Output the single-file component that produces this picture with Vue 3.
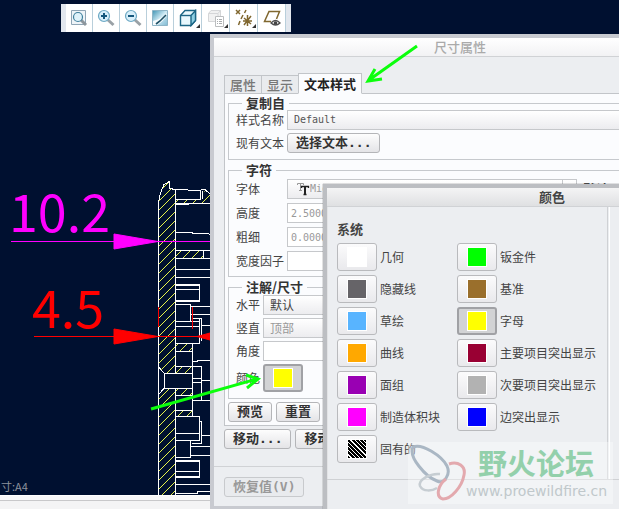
<script setup>
import { ref } from 'vue'

const tabs = ['属性', '显示', '文本样式']
const activeTab = ref('文本样式')

const colors = [
  { name: '几何', swatch: 'white' },
  { name: '钣金件', swatch: 'green' },
  { name: '隐藏线', swatch: 'gray' },
  { name: '基准', swatch: 'brown' },
  { name: '草绘', swatch: 'sky' },
  { name: '字母', swatch: 'yellow' },
  { name: '曲线', swatch: 'orange' },
  { name: '主要项目突出显示', swatch: 'crimson' },
  { name: '面组', swatch: 'purple' },
  { name: '次要项目突出显示', swatch: 'silver' },
  { name: '制造体积块', swatch: 'magenta' },
  { name: '边突出显示', swatch: 'blue' },
  { name: '固有的', swatch: 'hatch' },
]
const picked = ref('字母')
</script>

<template>
  <main class="desktop">
    <svg class="drawing" width="619" height="509" viewBox="0 0 619 509" aria-label="工程图">
      <defs>
        <pattern id="hatch" width="9" height="9" patternUnits="userSpaceOnUse">
          <path d="M-1 10L10-1M-1 1L1-1M8 10L10 8" stroke="#e6f24a" stroke-width="1" fill="none" />
        </pattern>
      </defs>
      <g fill="url(#hatch)" stroke="none">
        <path d="M159 202L160 193L164 184L169 181V188L175 190V373H164L159 367Z" />
        <path d="M164 388H175V495H159V394Z" />
        <path d="M175 200H201L205 190L210 194V203H175Z" />
        <path d="M175 250H203V258H175ZM175 344H192V351H175ZM175 367H192V373H175ZM175 388H192V395H175ZM175 411H192V416H175Z" />
      </g>
      <g class="lines">
        <path d="M158.500 495V202.500L160.500 193L164 184.500L169.500 181.500V188.500L175.500 189.500V351.500M175.500 366V373M175.500 388V495" />
        <path d="M175.500 189.500L200.500 190.500V199.500H175.500M202.500 191V199M201 189.500H205L210 194M175.500 203.500H210M175 204.500H189" />
        <path d="M175.500 232.500H192L193 233.500H208L210 234.500M175.500 250.500H210M203.500 250V258M175.500 258.500H210M175.500 269.500H210M175.500 277.500H210" />
        <path d="M175.500 284.500H199.500V301.500H175.500M175.500 285.500H199M175.500 289.500H199M175.500 300.500H199" />
        <path d="M175.500 304.500H190.500V321.500M190.500 306.500H210M190.500 314.500H210M192 318.500H201.500V340.500M199.500 319V343.500H175.500M175.500 321.500H199M175.500 326.500H199M201 325.500H210" />
        <path d="M192.500 343V400M175.500 351.500H192M175.500 351V366.500H192M158.500 367L164.500 373.500H192M164.500 373V388.500H192M164.500 388L158.500 394.500" />
        <path d="M192.500 361.500H197V360.500H210M192.500 366.500H201.500V400.500H210M192.500 378.500H201M192.500 382.500H201M201 380.500H210M201 400.500H192" />
        <path d="M175.500 395.500H192.500V410.500H175.500ZM192.500 410V416.500M175.500 416.500H199.500V440.500H175.500M175.500 433.500H199M199 421.500H201.500V443.500H192M201 435.500H210" />
        <path d="M175.500 440.500H190.500V457.500H175.500M190.500 446.500H210M190.500 455.500H210M175.500 460.500H199.500V477.500H175.500M175.500 461.500H199M175.500 471.500H199M175.500 476.500H199M175.500 484.500H210M175.500 493.500H197V491.500H210" />
      </g>
      <g class="dim-magenta">
        <path d="M11 241.500H210" />
        <path d="M114 234L158 241.500L114 249Z" />
        <text x="9" y="232">10.2</text>
      </g>
      <g class="dim-red">
        <path d="M34 336.500H210M158.500 307V327M192.500 307V329" />
        <path d="M114 329L158 336.500L114 344ZM197 336.500L210 333V340Z" />
        <text x="32" y="328">4.5</text>
      </g>
      <text class="sheet" x="1" y="491">寸:A4</text>
    </svg>
    <div class="statusbar"></div>

    <nav class="toolbar">
      <button type="button" aria-label="重新调整">
        <svg width="18" height="18" viewBox="0 0 18 18">
          <path d="M1.500 1.500H15.500V15.500H1.500Z" fill="#eef4f8" stroke="#8fa5b5" />
          <path d="M11 11L16 16" stroke="#8d969c" stroke-width="3" />
          <circle cx="8" cy="8" r="4.500" fill="#dff2fa" stroke="#3f7f9c" stroke-width="1.200" />
        </svg>
      </button>
      <button type="button" aria-label="放大">
        <svg width="18" height="18" viewBox="0 0 18 18">
          <path d="M10.500 10.500L16.500 16" stroke="#9aa1a6" stroke-width="3" />
          <circle cx="7" cy="7" r="5.500" fill="#d8effa" stroke="#6ea9c4" stroke-width="1.200" />
          <path d="M7 4V10M4 7H10" stroke="#15577c" stroke-width="2" />
        </svg>
      </button>
      <button type="button" aria-label="缩小">
        <svg width="18" height="18" viewBox="0 0 18 18">
          <path d="M10.500 10.500L16.500 16" stroke="#9aa1a6" stroke-width="3" />
          <circle cx="7" cy="7" r="5.500" fill="#d8effa" stroke="#6ea9c4" stroke-width="1.200" />
          <path d="M4 7H10" stroke="#15577c" stroke-width="2" />
        </svg>
      </button>
      <button type="button" aria-label="重画">
        <svg width="18" height="18" viewBox="0 0 18 18">
          <defs>
            <linearGradient id="repaint" x1="0" y1="0" x2="1" y2="1">
              <stop offset="0" stop-color="#3f93b3" />
              <stop offset="0.500" stop-color="#cfeaf4" />
              <stop offset="1" stop-color="#7fb9d2" />
            </linearGradient>
          </defs>
          <path d="M1.500 1.500H16.500V16.500H1.500Z" fill="url(#repaint)" stroke="#8db4c6" />
          <path d="M2 12Q11 10 15 4L16 6Q12 13 6 16H2Z" fill="#f6fbfd" />
          <path d="M15 6L9 12L5 15" stroke="#1e5066" stroke-width="1.600" fill="none" />
        </svg>
      </button>
      <button type="button" class="wide" aria-label="显示样式">
        <svg width="18" height="18" viewBox="0 0 18 18">
          <path d="M1.500 6.500L6 1.500H16.500V11.500L12 16.500H1.500Z" fill="#e8f8fd" stroke="#1c6685" stroke-width="1.400" />
          <path d="M12 6.500L16.500 1.500V11.500L12 16.500Z" fill="#8fcfe2" stroke="#1c6685" stroke-width="1.400" />
          <path d="M1.500 6.500H12" stroke="#1c6685" stroke-width="1.400" />
        </svg>
        <i></i>
      </button>
      <button type="button" class="wide" aria-label="视图列表">
        <svg width="18" height="18" viewBox="0 0 18 18">
          <path d="M1.500 4.500L4 1.500H13.500V9.500L11 12.500H1.500ZM1.500 4.500H11V12.500M11 4.500L13.500 1.500" fill="#f1f1f1" stroke="#d5d6d8" />
          <path d="M8.500 7.500H16.500V17.500H8.500Z" fill="#fff" stroke="#bbbdbf" />
          <path d="M10 10.500H11M12 10.500H15M10 12.500H11M12 12.500H15M10 14.500H11M12 14.500H15" stroke="#a9abad" />
        </svg>
        <i></i>
      </button>
      <button type="button" class="wide" aria-label="基准显示">
        <svg width="18" height="18" viewBox="0 0 18 18" fill="none" stroke="#80672f" stroke-width="1.500">
          <path d="M1 1L5 5M5 1L1 5M11 1L9.500 4M8 6L6 10M5 12L3.500 16M9 9L16 15M16 7L9 16M12.500 6V17M8 12H17" />
        </svg>
        <i></i>
      </button>
      <button type="button" class="wide" aria-label="注释显示">
        <svg width="18" height="18" viewBox="0 0 18 18" fill="none">
          <path d="M8 12.500H1.500L6 2.500H16.500L13.500 10" stroke="#80672f" stroke-width="1.500" />
          <path d="M8 14Q12.500 9 17 14Q12.500 18 8 14Z" fill="#fff" stroke="#4b4b4b" stroke-width="1.300" />
          <circle cx="12.500" cy="14" r="1.800" fill="#444" />
        </svg>
      </button>
    </nav>

    <section class="dialog properties">
      <h1>尺寸属性</h1>
      <div class="content">
        <div class="tabs" role="tablist">
          <button
            v-for="tab in tabs"
            :key="tab"
            type="button"
            role="tab"
            :class="{ active: tab === activeTab }"
            @click="activeTab = tab"
          >{{ tab }}</button>
        </div>
        <div class="panel">
          <fieldset>
            <legend>复制自</legend>
            <div class="row">
              <label for="style-name">样式名称</label>
              <select id="style-name" class="mono"><option>Default</option></select>
            </div>
            <div class="row">
              <label for="pick-text">现有文本</label>
              <button id="pick-text" type="button" class="push">选择文本...</button>
            </div>
          </fieldset>
          <fieldset class="chars">
            <legend>字符</legend>
            <div class="row">
              <label for="font">字体</label>
              <div class="fontbox">
                <svg width="14" height="14" viewBox="0 0 14 14" fill="none">
                  <path d="M1.500 3V1.500H7.500V3M4.500 1.500V8.500M3 8.500H6" stroke="#999" />
                  <path d="M5.500 6V4.500H12.500V6M9 4.500V12M7.500 12.500H10.500" stroke="#222" stroke-width="1.300" />
                  <path d="M9 4.500V12" stroke="#222" stroke-width="2" />
                </svg>
                <select id="font" class="mono" disabled><option>Microsoft YaHei</option></select>
                <span class="drop"></span>
              </div>
              <strong>默认</strong>
            </div>
            <div class="row">
              <label for="height">高度</label>
              <input id="height" class="mono" value="2.500000" disabled>
            </div>
            <div class="row">
              <label for="weight">粗细</label>
              <input id="weight" class="mono" value="0.000000" disabled>
            </div>
            <div class="row">
              <label for="factor">宽度因子</label>
              <input id="factor" class="mono">
            </div>
          </fieldset>
          <fieldset class="notes">
            <legend>注解/尺寸</legend>
            <div class="row">
              <label for="horizontal">水平</label>
              <select id="horizontal"><option>默认</option></select>
            </div>
            <div class="row">
              <label for="vertical">竖直</label>
              <select id="vertical" disabled><option>顶部</option></select>
            </div>
            <div class="row">
              <label for="angle">角度</label>
              <input id="angle" class="mono">
            </div>
            <div class="row">
              <label for="text-color">颜色</label>
              <button id="text-color" type="button" class="color pressed"><span class="swatch yellow"></span></button>
            </div>
          </fieldset>
          <div class="actions">
            <button type="button" class="push">预览</button>
            <button type="button" class="push">重置</button>
          </div>
        </div>
        <div class="moves">
          <button type="button" class="push">移动...</button>
          <button type="button" class="push">移动文本...</button>
        </div>
      </div>
      <footer>
        <button type="button" class="push" disabled>恢复值(V)</button>
      </footer>
    </section>

    <section class="dialog palette">
      <h1>颜色</h1>
      <div class="columns">
        <div class="system">
          <h2>系统</h2>
          <div class="grid">
            <div v-for="(c, i) in colors" :key="c.name" class="item">
              <button
                :id="'color-' + i"
                type="button"
                class="color"
                :class="{ pressed: c.name === picked }"
                @click="picked = c.name"
              ><span class="swatch" :class="c.swatch"></span></button>
              <label :for="'color-' + i">{{ c.name }}</label>
            </div>
          </div>
        </div>
        <div class="user"></div>
      </div>
    </section>

    <div class="watermark">
      <svg width="58" height="60" viewBox="0 0 58 60" fill="none">
        <path d="M5 5C14 1 34 14 39 24C43 33 36 42 29 39C18 35 0 15 5 5Z" stroke="#aab7c4" stroke-width="3" />
        <path d="M32 32C22 31 10 38 12 44C15 50 24 49 29 46" stroke="#c6cdd2" stroke-width="2.500" />
        <path d="M41 22C50 19 58 24 56 33C54 45 43 57 35 57C27 55 30 43 38 37" stroke="#e3a9ae" stroke-width="3" />
      </svg>
      <div>
        <b>野火论坛</b>
        <a href="#">www.proewildfire.cn</a>
      </div>
    </div>

    <svg class="arrows" width="619" height="509" viewBox="0 0 619 509" aria-hidden="true">
      <path d="M417 46L369 80M375 69L368 81L382 79" />
      <path d="M151 409L257 379M246 375L258 379L247 388" />
    </svg>
  </main>
</template>

<style>
body {
  margin: 0;
}
</style>

<style scoped>
.desktop {
  position: relative;
  height: 100vh;
  overflow: hidden;
  background: #001030;
  color: #444;
  font: 12px/14px "Noto Sans CJK SC", sans-serif;
}
button,
input,
select {
  box-sizing: border-box;
  margin: 0;
  padding: 0;
  border: 0;
  border-radius: 0;
  appearance: none;
  background: none;
  color: inherit;
  font: inherit;
  opacity: 1;
}
.drawing,
.arrows {
  position: absolute;
  top: 0;
  left: 0;
}
.arrows {
  pointer-events: none;
  fill: none;
  stroke: #0cff0c;
  stroke-width: 3;
}
.lines {
  fill: none;
  stroke: #fff;
  shape-rendering: crispEdges;
}
.dim-magenta {
  fill: #f0f;
  stroke: #f0f;
}
.dim-red {
  fill: #f00;
  stroke: #f00;
}
.drawing text {
  stroke: none;
  font-size: 52px;
}
.drawing .sheet {
  fill: #8c929c;
  font-size: 11px;
}
.statusbar {
  position: absolute;
  top: 495px;
  bottom: 0;
  left: 0;
  width: 100%;
  box-sizing: border-box;
  border-top: 1px solid #fff;
  background: linear-gradient(#f8f8f9 4px, #c8c8ca 4px, #c8c8ca 5px, #f4f4f5 5px);
}
.toolbar {
  position: absolute;
  top: 4px;
  left: 61px;
  display: flex;
  height: 28px;
  padding: 0 5px;
  background: #e2e7ee;
}
.toolbar button {
  position: relative;
  display: flex;
  align-items: center;
  justify-content: center;
  width: 27px;
  border-right: 1px solid #b9cfdb;
  background: #fff;
}
.toolbar .wide {
  width: 28px;
}
.toolbar i {
  position: absolute;
  right: 1px;
  bottom: 4px;
  border: 2px solid #333;
  border-top-color: transparent;
  border-left-color: transparent;
}
.dialog {
  position: absolute;
  display: flex;
  flex-direction: column;
  box-sizing: border-box;
  border: 4px solid #c8cad0;
  background: #eceef1;
}
.dialog h1 {
  margin: 0;
  height: 18px;
  border-bottom: 1px solid #d0d2d5;
  background: linear-gradient(#fff, #f2f2f4);
  font-size: 13px;
  font-weight: 500;
  line-height: 18px;
  text-align: center;
}
.properties {
  top: 34px;
  left: 210px;
  width: 500px;
}
.properties h1 {
  color: #aaa;
}
.content {
  padding: 16px 10px 17px;
}
.tabs {
  display: flex;
  align-items: flex-end;
  height: 21px;
  margin-bottom: -1px;
}
.tabs button {
  height: 19px;
  padding: 0 5px;
  border: 1px solid #c2c5c9;
  border-right: 0;
  background: #e9ebee;
  color: #777;
  font-size: 13px;
  font-weight: 500;
  line-height: 17px;
}
.tabs .active {
  height: 21px;
  border-right: 1px solid #c2c5c9;
  border-bottom-color: #fbfcfe;
  background: #fbfcfe;
  color: #222;
  font-weight: 700;
}
.panel {
  padding: 2px 3px 3px;
  border: 1px solid #c2c5c9;
  background: #fbfcfe;
}
fieldset {
  display: flex;
  flex-direction: column;
  gap: 3px;
  min-width: 0;
  margin: 0 0 3px;
  padding: 0 7px 6px;
  border: 1px solid #c6c9cd;
}
legend {
  margin-left: 6px;
  padding: 0 4px;
  color: #333;
  font-size: 13px;
  font-weight: 700;
  line-height: 14px;
}
.chars {
  gap: 4px;
  padding-top: 2px;
  padding-bottom: 5px;
}
.notes {
  padding-top: 1px;
}
.row {
  display: flex;
  align-items: center;
}
.row label {
  flex: none;
  width: 51px;
}
.notes label {
  width: 27px;
}
.row input,
.row select {
  flex: 1;
  min-width: 0;
  height: 20px;
  padding: 0 6px;
  border: 1px solid #c6c8cb;
  background: #fff;
}
.row select {
  background: linear-gradient(#fff, #ececef);
}
.row input {
  padding: 0 3px;
}
.row .mono {
  color: #555;
  font-family: "DejaVu Sans Mono", monospace;
  font-size: 10px;
}
.row input:disabled,
.row select:disabled {
  color: #999;
}
.fontbox {
  display: flex;
  align-items: center;
  box-sizing: border-box;
  width: 290px;
  height: 20px;
  padding-left: 8px;
  border: 1px solid #c6c8cb;
  background: linear-gradient(#fff, #ececef);
}
.row .fontbox .mono {
  height: 18px;
  padding: 0;
  border: 0;
  background: none;
}
.drop {
  width: 13px;
  height: 18px;
  border-left: 1px solid #c6c8cb;
}
.row strong {
  padding-left: 6px;
  font-size: 13px;
}
.push {
  height: 20px;
  padding: 0 8px;
  border: 1px solid #b4b5b8;
  border-radius: 3px;
  background: linear-gradient(#fdfdfd, #e4e4e7);
  color: #333;
  font-family: "DejaVu Sans Mono", "Noto Sans CJK SC", monospace;
  font-size: 13px;
  font-weight: 700;
  line-height: 18px;
}
.push:disabled {
  border-color: #c8cacd;
  background: #e9ebee;
  color: #999;
}
.actions,
.moves {
  display: flex;
  gap: 4px;
}
.moves {
  padding-top: 3px;
}
.properties footer {
  padding: 10px 10px 9px;
  border-top: 1px solid #d0d2d5;
}
.color {
  display: flex;
  flex: none;
  align-items: center;
  justify-content: center;
  width: 40px;
  height: 28px;
  border: 1px solid #b9babd;
  border-radius: 3px;
  background: linear-gradient(#fbfbfc, #e9e9ec);
}
.pressed {
  border: 2px solid #a0a1a5;
  background: #d2d3d5;
}
.swatch {
  width: 18px;
  height: 18px;
  border: 1px solid #fff;
}
.white { background: #fff; }
.green { background: #0f0; }
.gray { background: #666468; }
.brown { background: #9a6f2c; }
.sky { background: #58b4ff; }
.yellow { background: #ff0; }
.orange { background: #ffa800; }
.crimson { background: #990033; }
.purple { background: #9900b3; }
.silver { background: #b2b2b2; }
.magenta { background: #f0f; }
.blue { background: #00f; }
.hatch {
  background: repeating-linear-gradient(45deg, #000 0 2px, #fff 2px 3px);
}
.palette {
  top: 184px;
  bottom: -40px;
  left: 323px;
  width: 458px;
  border-color: #bcbec2;
  box-shadow: inset 0 0 0 1px #e2e3e5, 0 0 1px #555;
}
.palette h1 {
  background: linear-gradient(#f4f4f5, #dfe0e2);
  font-weight: 700;
}
.columns {
  display: flex;
  height: 272px;
  border-bottom: 1px solid #cfd1d4;
}
.system {
  flex: none;
  box-sizing: border-box;
  width: 281px;
  padding: 15px 10px;
  border-right: 1px solid #cfd1d4;
}
.user {
  flex: 1;
  margin-left: 1px;
  border-left: 1px solid #fff;
}
.system h2 {
  margin: 0 0 7px;
  font-size: 13px;
  font-weight: 700;
  line-height: 14px;
}
.grid {
  display: grid;
  grid-template-columns: 120px 1fr;
  row-gap: 4px;
}
.item {
  display: flex;
  align-items: center;
  gap: 3px;
  white-space: nowrap;
}
.watermark {
  position: absolute;
  top: 442px;
  left: 408px;
  display: flex;
  box-sizing: border-box;
  width: 205px;
  height: 62px;
  background: rgba(255, 255, 255, 0.35);
}
.watermark svg {
  flex: none;
}
.watermark div {
  display: flex;
  flex-direction: column;
}
.watermark b {
  padding-left: 12px;
  color: #93d0ab;
  font-size: 29px;
  line-height: 40px;
}
.watermark a {
  color: #c0c8cb;
  font-family: "DejaVu Sans", sans-serif;
  font-size: 14px;
  line-height: 18px;
  text-decoration: none;
}
</style>
